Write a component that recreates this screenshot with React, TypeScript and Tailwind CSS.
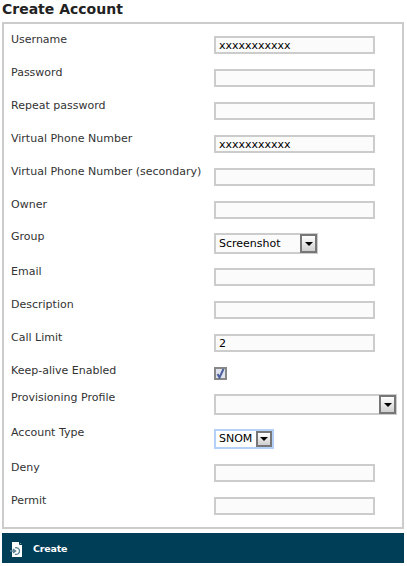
const inputCls =
  "block h-[18px] w-[161px] border-2 border-[#cccccc] bg-[#fbfbfb] px-[3px] text-[11px] leading-none text-black outline-none";

type Row = {
  label: string;
  h: number;
  kind: "input" | "select" | "check";
  value?: string;
  selectW?: number;
  focus?: boolean;
};

const rows: Row[] = [
  { label: "Username", h: 33, kind: "input", value: "xxxxxxxxxxx" },
  { label: "Password", h: 33, kind: "input" },
  { label: "Repeat password", h: 33, kind: "input" },
  { label: "Virtual Phone Number", h: 33, kind: "input", value: "xxxxxxxxxxx" },
  { label: "Virtual Phone Number (secondary)", h: 33, kind: "input" },
  { label: "Owner", h: 32, kind: "input" },
  { label: "Group", h: 35, kind: "select", value: "Screenshot", selectW: 104 },
  { label: "Email", h: 33, kind: "input" },
  { label: "Description", h: 33, kind: "input" },
  { label: "Call Limit", h: 33, kind: "input", value: "2" },
  { label: "Keep-alive Enabled", h: 27, kind: "check" },
  { label: "Provisioning Profile", h: 35, kind: "select", selectW: 183 },
  { label: "Account Type", h: 35, kind: "select", value: "SNOM", selectW: 60, focus: true },
  { label: "Deny", h: 33, kind: "input" },
  { label: "Permit", h: 33, kind: "input" },
];

const SelectBox = ({ value, width, focus }: { value?: string; width: number; focus?: boolean }) => (
  <div
    style={{ width }}
    className={
      focus
        ? "flex h-[20px] items-center justify-between border-2 border-[#b5d0f7] bg-white pl-[3px] text-[11px] text-black"
        : "flex h-[21px] items-center justify-between border-2 border-[#cccccc] bg-[#fbfbfb] pl-[3px] text-[11px] text-black"
    }
  >
    <span className="pt-[1px]">{value}</span>
    <span
      className={
        focus
          ? "flex h-[16px] w-[16px] items-center justify-center border-2 border-[#777777] bg-gradient-to-b from-white to-[#cfcfcf]"
          : "-mr-[1px] flex h-[19px] w-[17px] items-center justify-center border-2 border-[#777777] bg-gradient-to-b from-white to-[#cfcfcf]"
      }
    >
      <svg width="8" height="4" viewBox="0 0 8 4">
        <path d="M0 0h8L4 4z" fill="#000" />
      </svg>
    </span>
  </div>
);

export default function App() {
  return (
    <div className="h-[566px] w-[407px] overflow-hidden bg-white px-[2px] font-['DejaVu_Sans','Liberation_Sans',sans-serif]">
      <h1 className="h-[22px] pt-[1px] text-[14px] font-bold leading-[17px] text-[#222222]">Create Account</h1>

      <div className="h-[507px] w-[402px] border-2 border-[#cccccc] bg-white pl-[7px] pt-[12px]">
        {rows.map((row) => (
          <div key={row.label} style={{ height: row.h }} className="flex items-start">
            <label className="-mt-[3px] w-[203px] text-[11px] leading-[13px] text-[#333333]">{row.label}</label>
            {row.kind === "input" && (
              <input className={inputCls} readOnly value={row.value ?? ""} />
            )}
            {row.kind === "select" && (
              <SelectBox value={row.value} width={row.selectW ?? 100} focus={row.focus} />
            )}
            {row.kind === "check" && (
              <span className="flex h-[13px] w-[13px] items-center justify-center border-2 border-[#888888] bg-[#dfe3ee]">
                <svg width="11" height="11" viewBox="0 0 11 11" className="shrink-0">
                  <path d="M2.5 6l2 3.5L8.5 1" fill="none" stroke="#4a5f9c" strokeWidth="2" />
                </svg>
              </span>
            )}
          </div>
        ))}
      </div>

      <button className="mt-[4px] flex h-[30px] w-[402px] items-center gap-[10px] bg-[#003d56] pl-[8px] pt-[2px] text-[9.5px] font-bold tracking-[-0.2px] text-white">
        <svg width="13" height="15" viewBox="0 0 13 15">
          <path d="M2 0h7l3 3v12H2z" fill="#fff" />
          <path d="M9.5 0v2.5H12" fill="none" stroke="#003d56" />
          <path d="M0 9h5M3 7l2.5 2L3 11" fill="none" stroke="#5a8397" strokeWidth="1.5" />
          <path d="M5 5.8a3.4 3.4 0 1 1 0 6.4" fill="none" stroke="#5a8397" strokeWidth="1.3" />
        </svg>
        Create
      </button>
    </div>
  );
}
